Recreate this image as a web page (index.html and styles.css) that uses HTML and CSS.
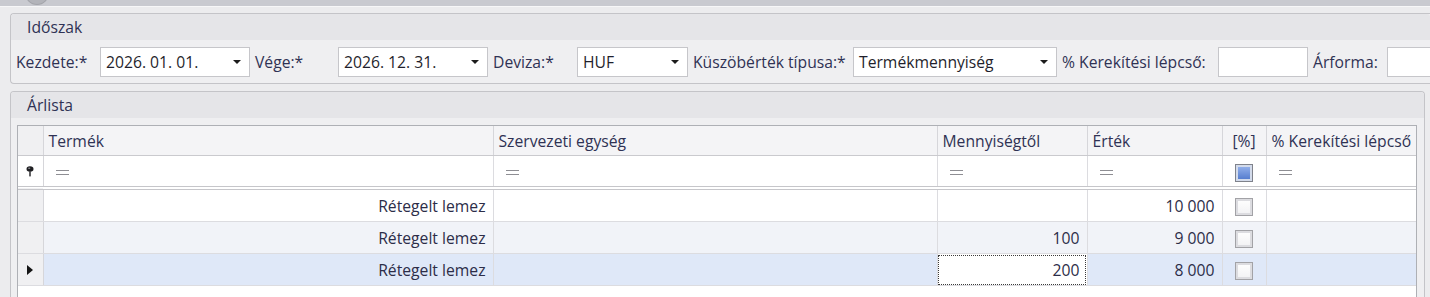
FILE: index.html
```html
<!DOCTYPE html>
<html lang="hu">
<head>
  <meta charset="UTF-8">
  <title>Árlista</title>
  <link rel="stylesheet" href="styles.css">
</head>
<body>
  <div class="topbar"><span class="orb"></span></div>

  <div class="page">
    <section class="group period">
      <div class="group-head">Időszak</div>
      <div class="fields">
        <label class="lbl first">Kezdete:*</label>
        <div class="edit combo"><span>2026. 01. 01.</span><i class="arrow"></i></div>
        <label class="lbl">Vége:*</label>
        <div class="edit combo"><span>2026. 12. 31.</span><i class="arrow"></i></div>
        <label class="lbl">Deviza:*</label>
        <div class="edit combo"><span>HUF</span><i class="arrow"></i></div>
        <label class="lbl">Küszöbérték típusa:*</label>
        <div class="edit combo"><span>Termékmennyiség</span><i class="arrow"></i></div>
        <label class="lbl">% Kerekítési lépcső:</label>
        <div class="edit"></div>
        <label class="lbl">Árforma:</label>
        <div class="edit"></div>
      </div>
    </section>

    <section class="group pricelist">
      <div class="group-head">Árlista</div>
      <div class="list-body">
        <div class="grid-wrap">
          <table class="grid">
            <colgroup>
              <col class="c-ind">
              <col class="c-prod">
              <col class="c-unit">
              <col class="c-qty">
              <col class="c-val">
              <col class="c-pct">
              <col class="c-round">
            </colgroup>
            <thead>
              <tr>
                <th class="ind"></th>
                <th>Termék</th>
                <th>Szervezeti egység</th>
                <th>Mennyiségtől</th>
                <th>Érték</th>
                <th class="center">[%]</th>
                <th>% Kerekítési lépcső</th>
              </tr>
            </thead>
            <tbody>
              <tr class="filter">
                <td class="ind">
                  <svg class="pin" width="8" height="11" viewBox="0 0 8 11">
                    <ellipse cx="4" cy="3" rx="3.5" ry="2.8" fill="#1f1f22"/>
                    <ellipse cx="3.2" cy="2.3" rx="1.2" ry="0.8" fill="#8a8a90"/>
                    <rect x="3.3" y="5.4" width="1.4" height="5" fill="#1f1f22"/>
                  </svg>
                </td>
                <td><i class="eq"></i></td>
                <td><i class="eq"></i></td>
                <td><i class="eq"></i></td>
                <td><i class="eq"></i></td>
                <td class="center"><i class="chk on"></i></td>
                <td><i class="eq"></i></td>
              </tr>
              <tr class="row">
                <td class="ind"></td>
                <td class="num">Rétegelt lemez</td>
                <td></td>
                <td></td>
                <td class="num">10&nbsp;000</td>
                <td class="center"><i class="chk"></i></td>
                <td></td>
              </tr>
              <tr class="row alt">
                <td class="ind"></td>
                <td class="num">Rétegelt lemez</td>
                <td></td>
                <td class="num">100</td>
                <td class="num">9&nbsp;000</td>
                <td class="center"><i class="chk"></i></td>
                <td></td>
              </tr>
              <tr class="row selected">
                <td class="ind">
                  <svg class="cur" width="6" height="10" viewBox="0 0 6 10"><path d="M0 0L6 5L0 10Z" fill="#151515"/></svg>
                </td>
                <td class="num">Rétegelt lemez</td>
                <td></td>
                <td class="num focus">200</td>
                <td class="num">8&nbsp;000</td>
                <td class="center"><i class="chk"></i></td>
                <td></td>
              </tr>
            </tbody>
          </table>
        </div>
      </div>
    </section>
  </div>
</body>
</html>
```

FILE: styles.css
```css
body {
  margin: 0;
  height: 297px;
  overflow: hidden;
  background: #ececee;
  font-family: "Open Sans", "Noto Sans", sans-serif;
  font-size: 15.7px;
  color: #2f3254;
}

/* felső sáv */
.topbar {
  height: 6px;
  background: #c9cad0;
  border-bottom: 1px solid #f7f7f8;
  overflow: hidden;
}
.orb {
  display: block;
  width: 22px;
  height: 22px;
  margin: -18px 0 0 26px;
  border-radius: 50%;
  background: #b3b4ba;
  box-shadow: 0 0 0 1px #a3a4aa;
}

.page {
  padding: 6px 5px 0 10px;
}

/* csoportdobozok */
.group {
  border: 1px solid #c4c4c8;
  border-radius: 4px;
  background: #efeff1;
}
.group + .group {
  margin-top: 7px;
}
.period {
  margin-right: -5px;
  border-right: 0;
  border-radius: 4px 0 0 4px;
  overflow: hidden;
}
.pricelist {
  border-bottom: 0;
  border-radius: 4px 4px 0 0;
}
.group-head {
  height: 26px;
  line-height: 26px;
  padding-left: 16px;
  background: #e5e5e8;
  border-radius: 3px 3px 0 0;
}

/* mezők */
.fields {
  display: grid;
  grid-template-columns: 84px 150px 88px 150px 89px 111px 165px 204px 161px 90px 79px 150px;
  align-items: center;
  padding: 7px 0 6px 5px;
  white-space: nowrap;
}
.lbl {
  padding-left: 5px;
}
.lbl.first {
  padding-left: 0;
}
.edit {
  height: 30px;
  box-sizing: border-box;
  border: 1px solid #c6c6ca;
  background: #fff;
  display: flex;
  align-items: center;
  padding: 0 8px 0 5px;
  color: #1f1f2c;
}
.combo .arrow {
  margin-left: auto;
  border-left: 4px solid transparent;
  border-right: 4px solid transparent;
  border-top: 4px solid #1c1c1c;
}

/* rács */
.list-body {
  padding: 7px 7px 0 6px;
}
.grid-wrap {
  height: 172px;
  background: #fff;
  border: 1px solid #aeb0b5;
  border-bottom: 0;
  overflow: hidden;
}
.grid {
  width: 100%;
  border-collapse: collapse;
  table-layout: fixed;
}
.c-ind { width: 25px; }
.c-prod { width: 450px; }
.c-unit { width: 444px; }
.c-qty { width: 150px; }
.c-val { width: 135px; }
.c-pct { width: 44px; }

.grid th {
  height: 29px;
  padding: 0 5px;
  background: #f4f4f6;
  border-right: 1px solid #d6d6da;
  border-bottom: 1px solid #cacace;
  text-align: left;
  font-weight: normal;
  white-space: nowrap;
  overflow: hidden;
}
.grid td {
  padding: 0 7px;
  border-right: 1px solid #dcdce0;
  border-bottom: 1px solid #dcdce0;
  white-space: nowrap;
  color: #2c2d48;
}
.grid th:last-child,
.grid td:last-child {
  border-right: 0;
}
.grid .center {
  text-align: center;
  padding: 0;
}
.grid .ind {
  padding: 0;
  background: #f0f0f2;
  border-right: 1px solid #d6d6da;
  text-align: center;
}

.filter td {
  height: 30px;
  padding-left: 12px;
  background: #fff;
  border-bottom: 4px double #c6c6ca;
}
.filter td.ind {
  background: #fff;
}
.eq {
  display: inline-block;
  width: 13px;
  height: 3px;
  border-top: 1px solid #8e8e93;
  border-bottom: 1px solid #8e8e93;
  vertical-align: middle;
}
.pin,
.cur {
  display: block;
  margin: 0 auto;
}

.row td {
  height: 31px;
}
.row.alt td {
  background: #f1f3f8;
}
.row.selected td {
  background: #dfe8f8;
}
.row td.ind {
  background: #f0f0f2;
}
.grid td.num {
  text-align: right;
}
.row td.focus {
  background: #fff;
  outline: 1px dotted #3a3a3a;
  outline-offset: -2px;
}

.chk {
  display: inline-block;
  width: 18px;
  height: 18px;
  box-sizing: border-box;
  border: 1px solid #a2a2a6;
  background: linear-gradient(#ffffff, #f1f1f3);
  box-shadow: inset 0 0 0 2px #dcdce0;
  vertical-align: middle;
}
.chk.on {
  border-color: #7f828b;
  background: linear-gradient(#9ab6ee, #4d76cb);
  box-shadow: inset 0 0 0 2px #d3dbeb;
}
```
